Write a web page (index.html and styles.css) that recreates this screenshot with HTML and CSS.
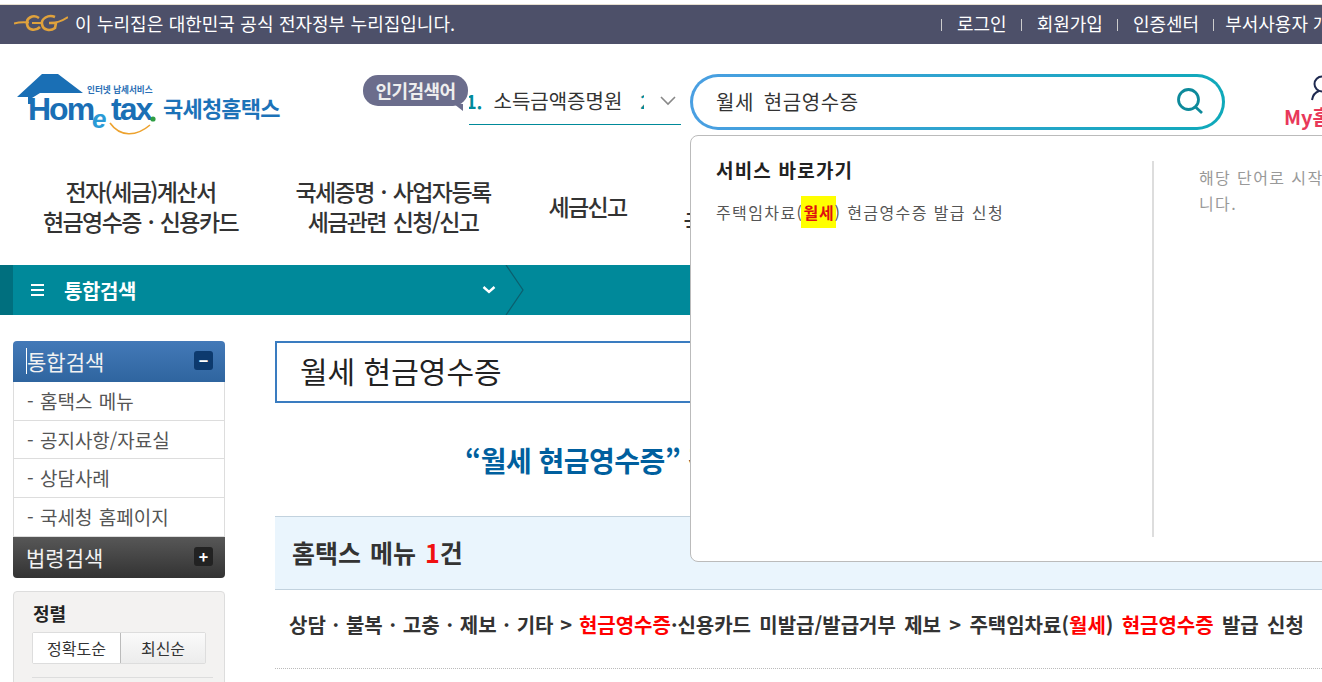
FILE: index.html
```html
<!DOCTYPE html>
<html lang="ko">

<head>
  <title>국세청 홈택스</title>
  <meta charset="utf-8">
  <link rel="stylesheet" href="styles.css">
</head>

<body>
  <div class="page">
    <div class="gov">
      <svg class="gov-logo" width="54" height="20" viewBox="0 0 54 20">
        <path d="M0 10.500 C5 9 10 9 15 9.500 M18 10 H27 M36 10 C42 10 48 8 54 4" fill="none" stroke="#e0a23c" stroke-width="2" />
        <path d="M25 5 C19 1 12 5 13 11 C14 18 22 18 26 14" fill="none" stroke="#e0a23c" stroke-width="2.600" />
        <path d="M41 4 C34 1 27 6 28 11 C29 18 37 18 41 15 L42 10 H35" fill="none" stroke="#e0a23c" stroke-width="2.600" />
      </svg>
      <span class="gov-text">이 누리집은 대한민국 공식 전자정부 누리집입니다.</span>
      <ul class="gov-links">
        <li>로그인</li>
        <li>회원가입</li>
        <li>인증센터</li>
        <li class="gov-last">부서사용자 개인</li>
      </ul>
    </div>

    <div class="top">
      <svg class="logo" width="270" height="66" viewBox="0 0 270 66">
        <path d="M28 2 H44 L69 21 H26 L18 26 V32 H14 V25 H3 Z" fill="#1a6fb5" />
        <text class="logo-small" x="73" y="21">인터넷 납세서비스</text>
        <text class="logo-main" x="14" y="48">Hom</text>
        <text class="logo-e" x="78" y="56">e</text>
        <text class="logo-main" x="97" y="48">tax</text>
        <circle cx="139" cy="47" r="2.600" fill="#2f9e44" />
        <path d="M96 51 C106 65 122 65 136 53" fill="none" stroke="#eda22e" stroke-width="1.600" />
        <text class="logo-name" x="149" y="45">국세청홈택스</text>
      </svg>
      <div class="bubble">인기검색어</div>
      <div class="ticker">
        <div class="ticker-list">
          <span class="ticker-no ticker-first">1.</span><span class="ticker-word">소득금액증명원</span><span class="ticker-no">2.</span>
        </div>
        <svg width="16" height="10" viewBox="0 0 16 10">
          <path d="M1 1 L8 8 L15 1" fill="none" stroke="#888" stroke-width="1.600" />
        </svg>
      </div>
      <div class="search">
        <span>월세 현금영수증</span>
        <svg width="28" height="28" viewBox="0 0 28 28">
          <circle cx="12.500" cy="12.500" r="10" fill="none" stroke="#0d8a9b" stroke-width="2.800" />
          <path d="M19.500 20 L26 26" fill="none" stroke="#0d8a9b" stroke-width="2.800" />
        </svg>
      </div>
      <div class="my">
        <svg width="24" height="26" viewBox="0 0 24 26">
          <circle cx="12" cy="9" r="7.500" fill="none" stroke="#1f2a50" stroke-width="2" />
          <path d="M2 25 C3 19 6 17 9 16" fill="none" stroke="#1f2a50" stroke-width="2" />
        </svg>
        <span>My홈택스</span>
      </div>
    </div>

    <ul class="nav">
      <li class="nav-one">전자(세금)계산서<br>현금영수증 · 신용카드</li>
      <li class="nav-two">국세증명 · 사업자등록<br>세금관련 신청/신고</li>
      <li class="nav-three">세금신고</li>
      <li class="nav-four">납부 고지<br>국세환급금</li>
    </ul>

    <div class="crumb">
      <svg class="crumb-menu" width="14" height="14" viewBox="0 0 14 14">
        <path d="M0 2 H13 M0 7 H13 M0 12 H13" stroke="#fff" stroke-width="2" />
      </svg>
      <span class="crumb-title">통합검색</span>
      <svg class="crumb-down" width="14" height="10" viewBox="0 0 14 10">
        <path d="M1.500 2 L7 7 L12.500 2" fill="none" stroke="#fff" stroke-width="2.400" />
      </svg>
      <svg class="crumb-sep" width="20" height="50" viewBox="0 0 20 50">
        <path d="M1 0 L18 25 L1 50" fill="none" stroke="#0b5f6e" stroke-width="1.200" />
      </svg>
    </div>

    <div class="main">
      <div class="side">
        <div class="side-head side-blue">
          <span class="caret">통합검색</span>
          <b class="toggle toggle-blue">−</b>
        </div>
        <ul class="side-list">
          <li>- 홈택스 메뉴</li>
          <li>- 공지사항/자료실</li>
          <li>- 상담사례</li>
          <li>- 국세청 홈페이지</li>
        </ul>
        <div class="side-head side-dark">
          <span>법령검색</span>
          <b class="toggle toggle-dark">+</b>
        </div>
        <div class="sort">
          <strong>정렬</strong>
          <div class="sort-btns">
            <button class="sort-on">정확도순</button>
            <button class="sort-off">최신순</button>
          </div>
          <hr>
        </div>
      </div>

      <div class="content">
        <div class="query">월세 현금영수증</div>
        <h2 class="result"><em>“월세 현금영수증”</em> 검색결과입니다.</h2>
        <div class="panel">홈택스 메뉴 <i>1</i>건</div>
        <div class="row"><span class="row-path">상담 · 불복 · 고충 · 제보 · 기타 &gt; </span><mark>현금영수증</mark>·신용카드 미발급/발급거부 제보 &gt; 주택임차료(<mark>월세</mark>) <mark>현금영수증</mark> 발급 신청</div>
      </div>
    </div>

    <div class="drop">
      <div class="drop-left">
        <h3>서비스 바로가기</h3>
        <p>주택임차료(<mark>월세</mark>) 현금영수증 발급 신청</p>
      </div>
      <p class="drop-right">해당 단어로 시작하는 검색어가 없습<br>니다.</p>
    </div>
  </div>
</body>

</html>
```

FILE: styles.css
```css
* {
  padding: 0;
  margin: 0;
  box-sizing: border-box;
}

body {
  font-family: "Noto Sans CJK KR", "Noto Sans", sans-serif;
  color: #333;
  background: #fff;
}

ul {
  list-style: none;
}

.page {
  width: 1322px;
  height: 682px;
  position: relative;
  overflow: hidden;
}

/* gov strip */
.gov {
  display: flex;
  align-items: center;
  height: 40px;
  margin-top: 4px;
  padding: 0 0 3px 14px;
  border-top: 1px solid #e6dfd0;
  background: #4d5069;
  color: #fff;
  font-size: 18px;
  white-space: nowrap;
}

.gov-logo {
  flex: none;
}

.gov-text {
  margin-left: 7px;
  width: 866px;
  flex: none;
  word-spacing: 0.400px;
}

.gov-links {
  display: flex;
  flex: none;
}

.gov-links li {
  padding: 0 14px 0 16px;
  position: relative;
}

.gov-links .gov-last {
  padding-left: 12px;
}

.gov-links li::before {
  content: "";
  position: absolute;
  left: 0;
  top: 9px;
  height: 12px;
  border-left: 1px solid #ccc;
}

/* logo, ticker, search */
.top {
  display: flex;
  height: 106px;
  padding-left: 14px;
  white-space: nowrap;
}

.logo {
  flex: none;
  margin-top: 28px;
}

.logo-small {
  font-size: 8.600px;
  font-weight: 700;
  fill: #2a6fb5;
}

.logo-main {
  font-family: "Liberation Sans", sans-serif;
  font-size: 32px;
  font-weight: 700;
  fill: #1a6fb5;
  letter-spacing: -2px;
}

.logo-e {
  font-family: "Liberation Sans", sans-serif;
  font-size: 26px;
  font-style: italic;
  font-weight: 700;
  fill: #2a9ad6;
}

.logo-name {
  font-size: 22px;
  font-weight: 700;
  fill: #1c72b8;
  letter-spacing: -0.800px;
}

.bubble {
  flex: none;
  position: relative;
  width: 105px;
  height: 31px;
  margin: 31px 0 0 79px;
  border-radius: 15px;
  background: #6b6d8c;
  color: #eee;
  font-size: 18px;
  font-weight: 700;
  line-height: 30px;
  text-align: center;
  letter-spacing: -0.600px;
}

.bubble::after {
  content: "";
  position: absolute;
  right: 5px;
  bottom: -5px;
  border-top: 7px solid #6b6d8c;
  border-left: 9px solid transparent;
}

.ticker {
  flex: none;
  display: flex;
  align-items: center;
  width: 212px;
  height: 47px;
  margin: 34px 9px 0 1px;
  border-bottom: 1px solid #008a9a;
}

.ticker svg {
  margin-left: 16px;
}

.ticker-list {
  width: 175px;
  overflow: hidden;
  font-size: 20px;
  line-height: 42px;
}

.ticker-no {
  color: #008a9a;
  font-size: 18px;
  font-weight: 700;
}

.ticker-first {
  margin-left: -3px;
}

.ticker-word {
  margin: 0 18px 0 11px;
}

.search {
  flex: none;
  display: flex;
  align-items: center;
  justify-content: space-between;
  width: 535px;
  height: 56px;
  margin-top: 30px;
  padding: 0 18px 2px 23px;
  border: 3px solid transparent;
  border-radius: 28px;
  background: linear-gradient(#fff, #fff) padding-box, linear-gradient(90deg, #4a9fe2, #0fa9ba) border-box;
  font-size: 20px;
  letter-spacing: 0.600px;
  word-spacing: 3.500px;
}

.my {
  flex: none;
  width: 120px;
  margin: 31px 0 0 59px;
  color: #e8385a;
  font-size: 20px;
  font-weight: 700;
  line-height: 32px;
}

.my svg {
  display: block;
  margin-left: 26px;
}

/* main menu */
.nav {
  display: flex;
  height: 115px;
  color: #333;
  font-size: 23px;
  font-weight: 500;
  line-height: 30px;
  text-align: center;
  letter-spacing: -1.600px;
  word-spacing: 2px;
  white-space: nowrap;
}

.nav li {
  flex: none;
  padding-top: 26px;
}

.nav-one {
  width: 281px;
}

.nav-two {
  width: 224px;
}

.nav .nav-three {
  width: 165px;
  padding-top: 41px;
}

.nav-four {
  width: 125px;
}

/* teal bar */
.crumb {
  display: flex;
  align-items: center;
  height: 50px;
  border-left: 13px solid #006f7e;
  background: #00899a;
  color: #fff;
}

.crumb-menu {
  margin-left: 18px;
}

.crumb-title {
  margin-left: 19px;
  width: 418px;
  flex: none;
  font-size: 20px;
  font-weight: 700;
  letter-spacing: -0.400px;
}

.crumb-sep {
  margin-left: 9px;
}

/* page body */
.main {
  display: flex;
  padding: 26px 0 0 13px;
}

.side {
  flex: none;
  width: 212px;
  margin-right: 50px;
}

.side-head {
  display: flex;
  align-items: center;
  justify-content: space-between;
  height: 41px;
  padding: 0 12px 2px 13px;
  color: #f2f2f2;
  font-size: 21px;
}

.side-blue {
  border-radius: 4px 4px 0 0;
  background: linear-gradient(#4379b8, #2f659f);
}

.side-dark {
  border-radius: 0 0 4px 4px;
  background: linear-gradient(#575757, #333);
}

.caret {
  border-left: 1px solid #fff;
  line-height: 26px;
}

.toggle {
  width: 19px;
  height: 19px;
  border-radius: 3px;
  color: #fff;
  font-size: 16px;
  line-height: 18px;
  text-align: center;
}

.toggle-blue {
  background: #0d3a6e;
}

.toggle-dark {
  background: #222;
}

.side-list {
  border: solid #ddd;
  border-width: 0 1px;
  color: #555;
  font-size: 19px;
  word-spacing: 1px;
}

.side-list li {
  height: 39px;
  padding-left: 13px;
  border-bottom: 1px solid #ddd;
  line-height: 37px;
}

.side-list li:nth-child(2) {
  height: 38px;
}

.sort {
  height: 120px;
  margin-top: 13px;
  padding: 9px 11px 0 18px;
  border: 1px solid #ddd;
  border-radius: 4px;
  background: #f3f2f1;
}

.sort strong {
  display: block;
  margin-left: 1px;
  color: #222;
  font-size: 18px;
  line-height: 24px;
}

.sort-btns {
  display: flex;
  width: 174px;
  margin-top: 7px;
  border: 1px solid #ddd;
  border-radius: 2px;
}

.sort-btns button {
  height: 30px;
  border: 0;
  font-family: inherit;
  font-size: 16px;
  color: #333;
}

.sort-on {
  width: 87px;
  background: #fff;
}

.sort-btns .sort-off {
  width: 85px;
  border-left: 1px solid #bbb;
  background: linear-gradient(#fafafa, #ececec);
}

.sort hr {
  margin-top: 13px;
  border: 0;
  border-top: 1px solid #ddd;
}

.content {
  flex: 1;
  min-width: 0;
}

.query {
  height: 62px;
  padding-left: 23px;
  border: 2px solid #3a7cc0;
  color: #222;
  font-size: 30px;
  line-height: 55px;
}

.result {
  height: 113px;
  padding: 37px 0 0 190px;
  color: #333;
  font-size: 28px;
  font-weight: 700;
  line-height: 40px;
  letter-spacing: -0.500px;
  white-space: nowrap;
}

.result em {
  color: #005f9e;
  font-style: normal;
}

.panel {
  height: 74px;
  padding-left: 17px;
  border: solid #c2d2de;
  border-width: 1px 0;
  background: #eaf5fd;
  font-size: 25px;
  font-weight: 700;
  line-height: 71px;
  word-spacing: 2px;
}

.panel i {
  color: #f01010;
  font-style: normal;
}

.row {
  height: 79px;
  padding-left: 14px;
  border-bottom: 1px dotted #bbb;
  font-size: 20px;
  font-weight: 700;
  line-height: 70px;
  word-spacing: 2.700px;
  white-space: nowrap;
}

.row-path {
  word-spacing: 1.200px;
}

.row mark {
  background: none;
  color: #f00;
}

/* autocomplete over the page */
.drop {
  position: absolute;
  left: 690px;
  top: 135px;
  display: flex;
  width: 760px;
  height: 427px;
  padding-top: 25px;
  border: 1px solid #bbb;
  border-radius: 8px;
  background: #fff;
  white-space: nowrap;
}

.drop-left {
  flex: none;
  width: 463px;
  height: 376px;
  padding-left: 25px;
  border-right: 2px solid #ddd;
}

.drop-left h3 {
  color: #222;
  font-size: 19px;
  font-weight: 700;
  line-height: 18px;
  letter-spacing: 1.200px;
}

.drop-left p {
  margin-top: 17px;
  color: #555;
  font-size: 16px;
  line-height: 32px;
  letter-spacing: 1.400px;
}

.drop-left mark {
  display: inline-block;
  height: 32px;
  margin: 0 -2px;
  padding: 0 2px;
  background: #ff0;
  color: #e01010;
  font-weight: 700;
  letter-spacing: 0.800px;
}

.drop-right {
  margin-left: 45px;
  padding-top: 3px;
  color: #999;
  font-size: 16px;
  line-height: 26px;
  letter-spacing: 1.400px;
}
```
